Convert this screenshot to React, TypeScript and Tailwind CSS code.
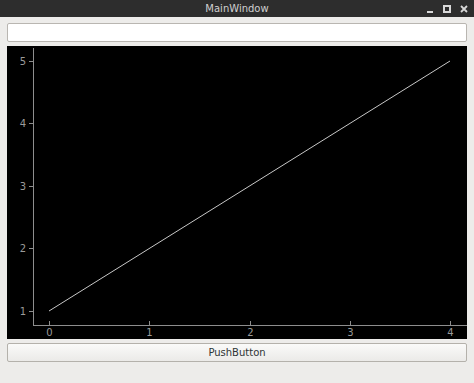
import React from 'react';

const xTicks = [
  { x: 42, label: '0' },
  { x: 142, label: '1' },
  { x: 243, label: '2' },
  { x: 343, label: '3' },
  { x: 443, label: '4' },
];

const yTicks = [
  { y: 15, label: '5' },
  { y: 77, label: '4' },
  { y: 140, label: '3' },
  { y: 202, label: '2' },
  { y: 265, label: '1' },
];

const Plot = () => (
  <svg width="460" height="293" viewBox="0 0 460 293" className="block">
    <rect width="460" height="293" fill="#000" />
    <line x1="26.5" y1="2" x2="26.5" y2="279" stroke="#8e8e8e" />
    <line x1="26" y1="279.5" x2="460" y2="279.5" stroke="#8e8e8e" />
    {xTicks.map((t) => (
      <g key={t.label}>
        <line x1={t.x + 0.5} y1="275" x2={t.x + 0.5} y2="279" stroke="#8e8e8e" />
        <text
          x={t.x + 0.5}
          y="290"
          fill="#9a9a9a"
          fontSize="10"
          textAnchor="middle"
          fontFamily="'DejaVu Sans', sans-serif"
        >
          {t.label}
        </text>
      </g>
    ))}
    {yTicks.map((t) => (
      <g key={t.label}>
        <line x1="22" y1={t.y + 0.5} x2="26" y2={t.y + 0.5} stroke="#8e8e8e" />
        <text
          x="19"
          y={t.y + 4}
          fill="#9a9a9a"
          fontSize="10"
          textAnchor="end"
          fontFamily="'DejaVu Sans', sans-serif"
        >
          {t.label}
        </text>
      </g>
    ))}
    <line x1="42" y1="265" x2="443" y2="15" stroke="#c8c8c8" strokeWidth="1" />
  </svg>
);

export default function App() {
  return (
    <div className="flex h-[383px] w-[474px] flex-col bg-[#edecea] font-['DejaVu_Sans',sans-serif]">
      <div className="relative flex h-[17px] items-center justify-center bg-[#2d2d2d]">
        <span className="text-[10px] text-[#d0d0d0]">MainWindow</span>
        <div className="absolute right-[6px] top-0 flex h-full items-center gap-[9px]">
          <svg width="8" height="8" viewBox="0 0 8 8">
            <rect x="1" y="6" width="6" height="2" fill="#d8d8d8" />
          </svg>
          <svg width="8" height="8" viewBox="0 0 8 8">
            <rect x="1" y="1" width="6" height="6" fill="none" stroke="#d8d8d8" strokeWidth="2" />
          </svg>
          <svg width="8" height="8" viewBox="0 0 8 8">
            <path d="M1 1 L7 7 M7 1 L1 7" stroke="#d8d8d8" strokeWidth="1.8" />
          </svg>
        </div>
      </div>
      <div className="flex flex-col gap-[4px] px-[7px] pt-[6px]">
        <div className="h-[19px] rounded-[2px] border border-[#b9b6b1] bg-white" />
        <Plot />
        <button
          type="button"
          className="flex h-[19px] items-center justify-center rounded-[2px] border border-[#b4b1ab] bg-gradient-to-b from-[#fafaf9] to-[#ebeae8] text-[10px] text-[#2e3436]"
        >
          PushButton
        </button>
      </div>
    </div>
  );
}
